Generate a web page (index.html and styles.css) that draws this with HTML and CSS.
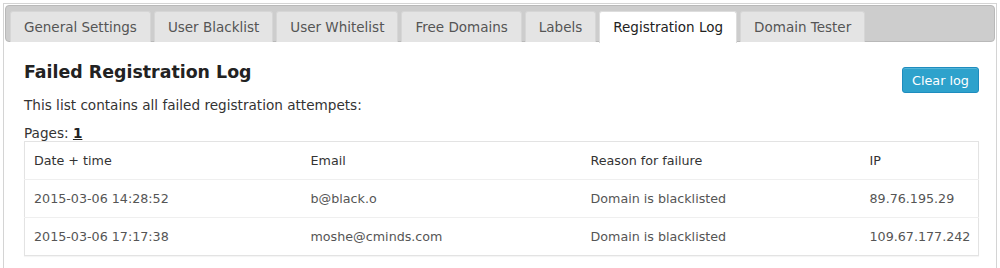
FILE: index.html
```html
<!DOCTYPE html>
<html>
<head>
<meta charset="utf-8">
<link rel="stylesheet" href="styles.css">
</head>
<body>
<div class="frame">
  <div class="tabbar">
    <div class="tab">General Settings</div>
    <div class="tab">User Blacklist</div>
    <div class="tab">User Whitelist</div>
    <div class="tab">Free Domains</div>
    <div class="tab">Labels</div>
    <div class="tab active">Registration Log</div>
    <div class="tab">Domain Tester</div>
  </div>
  <div class="panel">
    <div class="head">
      <h2 class="title">Failed Registration Log</h2>
      <button class="btn">Clear log</button>
    </div>
    <p class="desc">This list contains all failed registration attempets:</p>
    <div class="pages">Pages: <a class="pagelink">1</a></div>
    <table class="log">
      <colgroup><col class="c1"><col class="c2"><col class="c3"><col></colgroup>
      <thead>
        <tr><th>Date + time</th><th>Email</th><th>Reason for failure</th><th>IP</th></tr>
      </thead>
      <tbody>
        <tr><td>2015-03-06 14:28:52</td><td>b@black.o</td><td>Domain is blacklisted</td><td>89.76.195.29</td></tr>
        <tr><td>2015-03-06 17:17:38</td><td>moshe@cminds.com</td><td>Domain is blacklisted</td><td>109.67.177.242</td></tr>
      </tbody>
    </table>
  </div>
</div>
</body>
</html>
```
FILE: styles.css
```css
html, body { margin: 0; padding: 0; background: #fff; }
body { font-family: "DejaVu Sans", Verdana, sans-serif; color: #333; width: 1000px; height: 268px; overflow: hidden; }
.frame { margin: 3px 3px 0 3px; border: 1px solid #d4d4d4; border-bottom: none; height: 265px; box-sizing: border-box; padding: 1px; }
.tabbar { display: flex; gap: 3px; background: #cdcdcd; border: 1px solid #b9b9b9; border-radius: 4px; padding: 5px 0 0 4px; height: 37px; box-sizing: border-box; }
.tab { background: #e4e4e4; border: 1px solid #d6d6d6; border-bottom: none; border-radius: 3px 3px 0 0; padding: 0 13px; font-size: 13.5px; color: #555; line-height: 30px; height: 31px; box-sizing: border-box; white-space: nowrap; }
.tab.active { background: #fff; color: #222; height: 32px; border-color: #ddd; }
.panel { padding: 0 16px 0 19px; }
.head { display: flex; justify-content: space-between; align-items: flex-start; }
.title { margin: 19px 0 0 0; font-size: 17.4px; font-weight: bold; color: #222; line-height: 22px; }
.btn { margin-top: 25px; background: #2ea2cc; border: 1px solid #1e8cbe; border-radius: 3px; color: #fff; font-family: inherit; font-size: 12.8px; height: 26px; padding: 0 9px; box-shadow: inset 0 1px 0 rgba(120,200,230,.5); }
.desc { margin: 3px 0 0 0; font-size: 13.6px; line-height: 18px; color: #333; }
.pages { margin-top: 10px; font-size: 13.6px; line-height: 18px; color: #333; }
.pagelink { font-weight: bold; text-decoration: underline; color: #222; }
.log { width: 100%; table-layout: fixed; border-collapse: collapse; border: 1px solid #e3e3e3; box-shadow: 0 1px 1px rgba(0,0,0,.04); font-size: 12.7px; margin-top: -1px; }
.log th { font-weight: normal; text-align: left; color: #333; height: 37px; padding: 0 9px; }
.log td { height: 37px; padding: 0 9px; border-top: 1px solid #efefef; color: #555; }
.c1 { width: 277px; }
.c2 { width: 280px; }
.c3 { width: 279px; }
```
